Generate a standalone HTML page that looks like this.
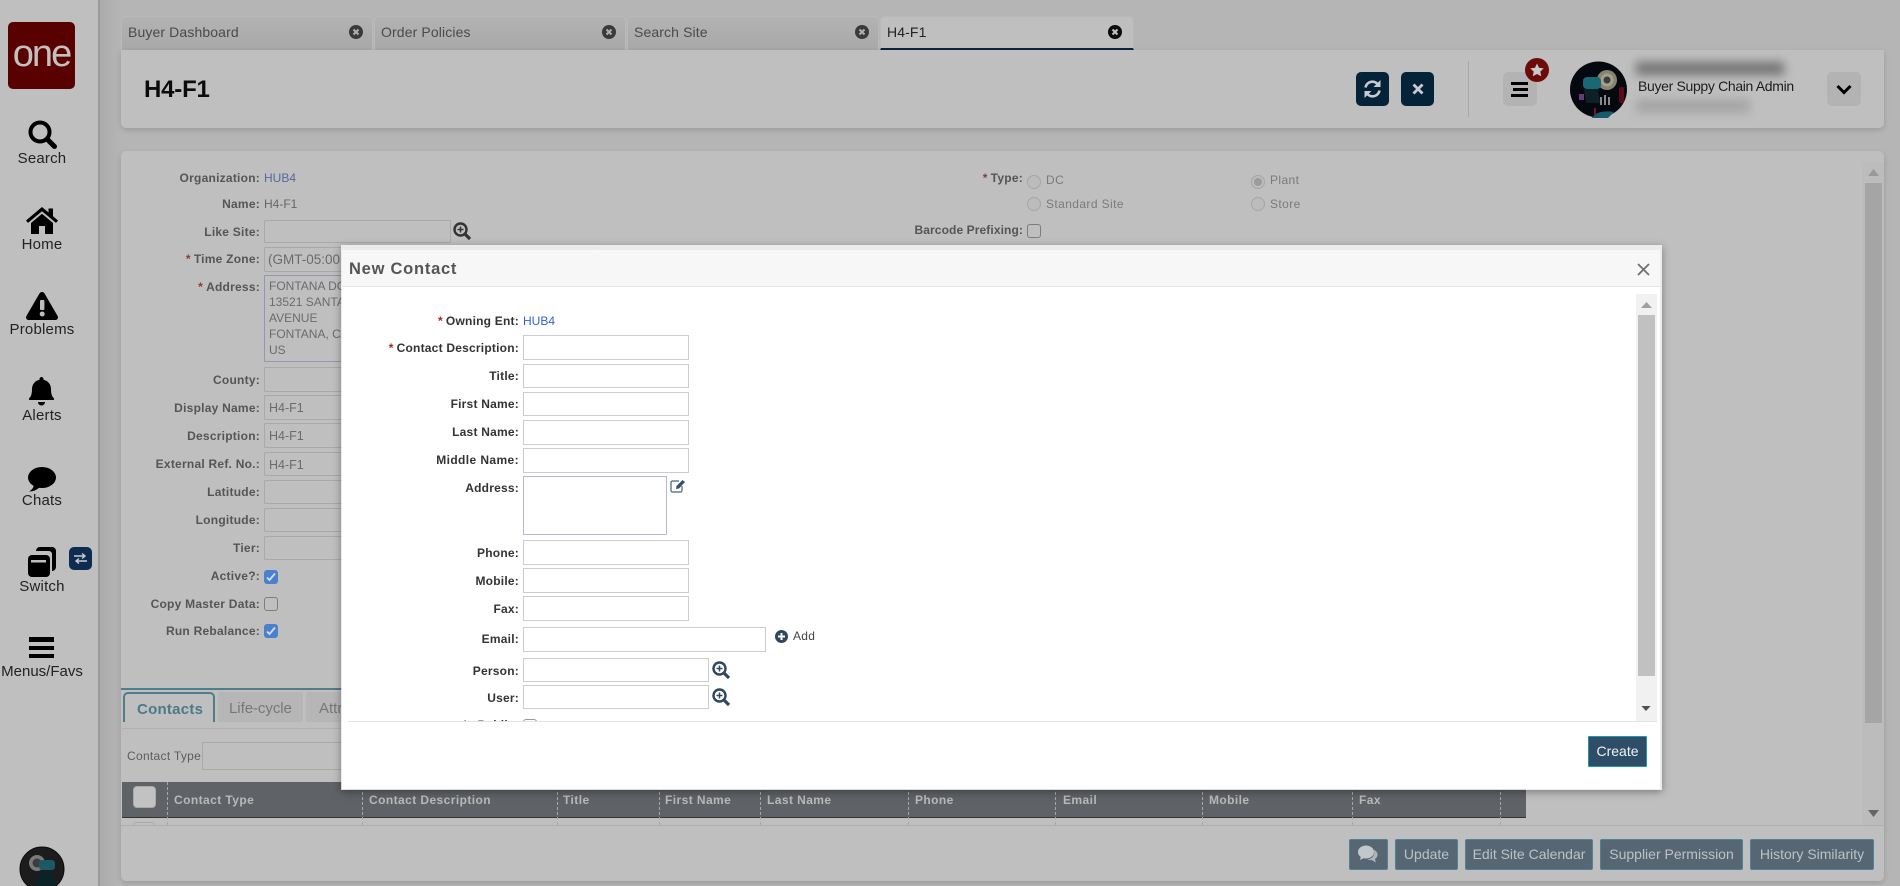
<!DOCTYPE html>
<html><head><meta charset="utf-8"><title>H4-F1</title>
<style>
html,body{margin:0;padding:0}
body{width:1900px;height:886px;overflow:hidden;background:#b5b5b5;position:relative;font-family:"Liberation Sans",sans-serif;font-size:12px;color:#555}
div,span,svg{position:absolute;box-sizing:border-box}
.t{white-space:nowrap;line-height:16px}
.nav{left:0;width:84px;text-align:center;font-size:15px;color:#222;line-height:18px;white-space:nowrap;letter-spacing:.2px}
.tab{top:16px;height:34px;width:252px;border-radius:5px 5px 0 0;background:linear-gradient(#b3b3b3,#a8a8a8);border:1px solid #b9b9b9;border-bottom:0}
.tt{top:24px;font-size:14px;letter-spacing:.12px;color:#4a4a4a;white-space:nowrap;line-height:16px}
.lb{left:100px;width:160px;text-align:right;font-weight:bold;font-size:12px;letter-spacing:.24px;color:#555;white-space:nowrap;line-height:16px}
.lb i,.ml i{font-style:normal;color:#8c3a3a;margin-right:3px}
.f{left:264px;width:200px;border:1px solid #a9a9a9;background:#bfbfbf;border-radius:1px;font-size:12.5px;color:#6b6b6b;padding:4px 0 0 4px;white-space:nowrap;line-height:16px}
.cb{left:264px;width:14px;height:14px;border-radius:3px}
.on{background:#4a80cc;border:1px solid #4a80cc}
.off{background:#bfbfbf;border:1.5px solid #7d7d7d}
.sep{top:782px;height:43px;width:0;border-left:1px dashed #a8a8a8}
.th{top:792px;font-weight:bold;color:#b9b9b9;font-size:12px;letter-spacing:.42px;white-space:nowrap;line-height:16px}
.fb{top:839px;height:31px;background:#566673;border:1px solid #4b8494;border-radius:2px;color:#bcc2c7;font-size:14px;text-align:center;line-height:29px;white-space:nowrap}
.rd{width:14px;height:14px;border-radius:50%;border:1px solid #a6a6a6;background:#bcbcbc}
.rt{font-size:12px;letter-spacing:.4px;color:#7a7a7a;white-space:nowrap;line-height:16px}
.ml{left:342px;width:177px;text-align:right;font-weight:bold;font-size:12px;letter-spacing:.22px;color:#333;white-space:nowrap;line-height:16px}
.ml i{color:#b02020}
.mi{left:523px;width:166px;height:25px;border:1px solid #ccc;background:#fff}
</style></head><body>

<!-- sidebar -->
<div style="left:99px;top:0;width:22px;height:886px;background:linear-gradient(90deg,#ababab,#b5b5b5)"></div>
<div style="left:0;top:0;width:100px;height:886px;background:#bfbfbf;border-right:2px solid #9b9b9b"></div>
<div style="left:8px;top:22px;width:67px;height:67px;background:#590000;border-radius:5px;color:#c4c0c0;font-size:38px;line-height:64px;text-align:center;letter-spacing:-2px">one</div>

<svg style="left:28px;top:120px" width="29" height="29" viewBox="0 0 29 29"><circle cx="12" cy="12" r="9.500" fill="none" stroke="#000" stroke-width="4"/><path d="M19 19l7.500 7.500" stroke="#000" stroke-width="5" stroke-linecap="round"/></svg>
<div class="nav" style="top:150px">Search</div>

<svg style="left:26px;top:207px" width="32" height="27" viewBox="0 0 32 27"><path d="M16 0L0 13.500l2 2.400L16 4.200l14 11.700 2-2.400-5-4.200V1.500h-4.500v4L16 0z" fill="#000"/><path d="M16 6.800L5 16v11h8v-8h6v8h8V16z" fill="#000"/></svg>
<div class="nav" style="top:236px">Home</div>

<svg style="left:26px;top:292px" width="32" height="28" viewBox="0 0 32 28"><path d="M16 0c1 0 2 .6 2.600 1.600l13 22.400c1 1.800-.2 4-2.600 4H3c-2.400 0-3.600-2.200-2.600-4l13-22.400C14 .6 15 0 16 0z" fill="#000"/><rect x="14" y="8" width="4.400" height="10" rx="1" fill="#bfbfbf"/><circle cx="16.200" cy="22" r="2.500" fill="#bfbfbf"/></svg>
<div class="nav" style="top:321px">Problems</div>

<svg style="left:29px;top:377px" width="25" height="29" viewBox="0 0 25 29"><path d="M12.500 0c1.100 0 2 .9 2 2v.8c4.500.9 7.500 4.700 7.500 9.200 0 6 1.500 8 3 9.500.4.500 0 1.500-.8 1.500H.8c-.8 0-1.200-1-.8-1.500C1.500 20 3 18 3 12c0-4.500 3-8.300 7.500-9.200V2c0-1.100.9-2 2-2z" fill="#000"/><path d="M9 25h7c0 2-1.500 3.500-3.500 3.500S9 27 9 25z" fill="#000"/></svg>
<div class="nav" style="top:407px">Alerts</div>

<svg style="left:28px;top:467px" width="28" height="25" viewBox="0 0 28 25"><ellipse cx="14" cy="10.500" rx="14" ry="10.500" fill="#000"/><path d="M6 17C6 20 4 23 1 24.500c4.500 0 9-2 11-5z" fill="#000"/></svg>
<div class="nav" style="top:492px">Chats</div>

<svg style="left:28px;top:547px" width="28" height="30" viewBox="0 0 28 30"><path d="M8 4a4 4 0 0 1 4-4h12a4 4 0 0 1 4 4v16a4 4 0 0 1-4 4v-17a3 3 0 0 0-3-3H8z" fill="#000"/><rect x="0" y="8" width="22" height="22" rx="4" fill="#000"/><rect x="3" y="13" width="15" height="2.500" fill="#bfbfbf"/></svg>
<div style="left:69px;top:547px;width:23px;height:23px;background:#0e2c50;border-radius:5px"></div>
<svg style="left:74px;top:553px" width="13" height="11" viewBox="0 0 13 11"><path d="M0 3h10M8 0.500L11 3 8 5.500M13 8H3M5 5.500L2 8l3 2.500" fill="none" stroke="#c8ccd2" stroke-width="1.400"/></svg>
<div class="nav" style="top:578px">Switch</div>

<div style="left:29px;top:637px;width:25px;height:5px;background:#000"></div>
<div style="left:29px;top:646px;width:25px;height:4px;background:#000"></div>
<div style="left:29px;top:654px;width:25px;height:4px;background:#000"></div>
<div class="nav" style="top:663px;font-size:15px;letter-spacing:0">Menus/Favs</div>

<svg style="left:19px;top:846px" width="46" height="40" viewBox="0 0 46 40"><circle cx="23" cy="23" r="22" fill="#1c1c1c" stroke="#0c0c0c" stroke-width="1"/><circle cx="18" cy="17" r="8" fill="#7a7a7a"/><circle cx="18" cy="17" r="4.500" fill="#3c3c3c"/><rect x="20" y="14" width="16" height="10" rx="3" fill="#1a5a66"/><path d="M16 40l4-14h13l4 14z" fill="#0b2226"/></svg>

<!-- tabs -->
<div class="tab" style="left:121px"></div>
<div class="tab" style="left:374px"></div>
<div class="tab" style="left:627px"></div>
<div class="tab" style="left:880px;width:254px;background:#bfbfbf;border-bottom:2px solid #0c2440"></div>
<div class="tt" style="left:128px">Buyer Dashboard</div>
<div class="tt" style="left:381px">Order Policies</div>
<div class="tt" style="left:634px">Search Site</div>
<div class="tt" style="left:887px;color:#222">H4-F1</div>
<svg style="left:349px;top:25px" width="14" height="14" viewBox="0 0 14 14"><circle cx="7" cy="7" r="7" fill="#3a3a3a"/><path d="M4.500 4.500l5 5m0-5l-5 5" stroke="#b0b0b0" stroke-width="2"/></svg>
<svg style="left:602px;top:25px" width="14" height="14" viewBox="0 0 14 14"><circle cx="7" cy="7" r="7" fill="#3a3a3a"/><path d="M4.500 4.500l5 5m0-5l-5 5" stroke="#b0b0b0" stroke-width="2"/></svg>
<svg style="left:855px;top:25px" width="14" height="14" viewBox="0 0 14 14"><circle cx="7" cy="7" r="7" fill="#3a3a3a"/><path d="M4.500 4.500l5 5m0-5l-5 5" stroke="#b0b0b0" stroke-width="2"/></svg>
<svg style="left:1108px;top:25px" width="14" height="14" viewBox="0 0 14 14"><circle cx="7" cy="7" r="7" fill="#0c0c0c"/><path d="M4.500 4.500l5 5m0-5l-5 5" stroke="#c4c4c4" stroke-width="2"/></svg>

<!-- header -->
<div style="left:121px;top:50px;width:1763px;height:78px;background:#bfbfbf;border-radius:0 0 5px 5px;box-shadow:0 2px 6px rgba(0,0,0,.15)"></div>
<div class="t" style="left:144px;top:76px;font-size:24px;line-height:28px;font-weight:bold;color:#0b0b0b;letter-spacing:-.2px">H4-F1</div>
<div style="left:1356px;top:72px;width:33px;height:34px;background:#042238;border-radius:5px"></div>
<svg style="left:1363px;top:79px" width="19" height="20" viewBox="0 0 19 20"><path d="M2.500 8.500A7 7 0 0 1 15 5.500" fill="none" stroke="#c8ccd0" stroke-width="2.600"/><path d="M17.500 1v7h-7z" fill="#c8ccd0"/><path d="M16.500 11.500A7 7 0 0 1 4 14.500" fill="none" stroke="#c8ccd0" stroke-width="2.600"/><path d="M1.500 19v-7h7z" fill="#c8ccd0"/></svg>
<div style="left:1401px;top:72px;width:33px;height:34px;background:#042238;border-radius:5px"></div>
<svg style="left:1412px;top:83px" width="12" height="12" viewBox="0 0 12 12"><path d="M1.500 1.500l9 9m0-9l-9 9" stroke="#c8ccd0" stroke-width="2.800"/></svg>
<div style="left:1468px;top:61px;width:1px;height:56px;background:#a8a8a8"></div>
<div style="left:1503px;top:72px;width:34px;height:34px;background:#b3b3b3;border-radius:5px"></div>
<div style="left:1511px;top:82px;width:17px;height:3px;background:#000"></div>
<div style="left:1513px;top:88px;width:15px;height:3px;background:#000"></div>
<div style="left:1511px;top:94px;width:17px;height:3px;background:#000"></div>
<div style="left:1525px;top:58px;width:24px;height:24px;background:#6d0a0a;border-radius:50%"></div>
<svg style="left:1530px;top:63px" width="14" height="14" viewBox="0 0 14 14"><path d="M7 .5l2 4.300 4.700.6-3.400 3.200.9 4.700L7 11l-4.200 2.300.9-4.700L.3 5.400 5 4.800z" fill="#c9c9c9"/></svg>
<svg style="left:1570px;top:61px" width="57" height="57" viewBox="0 0 57 57"><ellipse cx="28.500" cy="28.500" rx="28.500" ry="28" fill="#060810"/><circle cx="37" cy="19" r="10" fill="#86836f"/><circle cx="37" cy="19" r="6.500" fill="#a3a090"/><circle cx="37" cy="19" r="3.500" fill="#3d3c38"/><rect x="13" y="16" width="18" height="12" rx="4" fill="#1a6874"/><path d="M14 28h14l2 14H16z" fill="#0d2025"/><rect x="49" y="26" width="5" height="16" rx="2" fill="#5a0a18"/><rect x="9" y="33" width="5" height="6" fill="#6a3a76"/><path d="M22 57c2-5 11-8 22-6l-6 6z" fill="#175a6c"/><path d="M31 36v8M35 34v10M39 36v8" stroke="#8a8a8a" stroke-width="2"/><rect x="24" y="47" width="2" height="7" fill="#7a1020"/></svg>
<div style="left:1636px;top:62px;width:148px;height:13px;background:#4a4a4a;filter:blur(5px);opacity:.65"></div>
<div class="t" style="left:1638px;top:78px;font-size:14px;color:#1c1c1c;letter-spacing:-.33px">Buyer Suppy Chain Admin</div>
<div style="left:1636px;top:100px;width:114px;height:12px;background:#8e8e8e;filter:blur(5px);opacity:.6"></div>
<div style="left:1827px;top:72px;width:34px;height:34px;background:#b3b3b3;border-radius:5px"></div>
<svg style="left:1836px;top:84px" width="16" height="11" viewBox="0 0 16 11"><path d="M1.500 2l6.500 6.500L14.500 2" fill="none" stroke="#000" stroke-width="3"/></svg>

<!-- main panel -->
<div style="left:121px;top:151px;width:1763px;height:730px;background:#bfbfbf;border-radius:5px;box-shadow:0 2px 6px rgba(0,0,0,.15)"></div>

<div class="lb" style="top:170px">Organization:</div>
<div class="t" style="left:264px;top:170px;color:#56689c">HUB4</div>
<div class="lb" style="top:196px">Name:</div>
<div class="t" style="left:264px;top:196px;color:#666">H4-F1</div>
<div class="lb" style="top:224px">Like Site:</div>
<div class="f" style="top:220px;width:187px;height:23px"></div>
<svg style="left:453px;top:222px" width="18" height="18" viewBox="0 0 18 18"><circle cx="7.500" cy="7.500" r="6" fill="none" stroke="#333" stroke-width="2.400"/><path d="M12 12l5 5" stroke="#333" stroke-width="3.200"/><path d="M7.500 4.500v6M4.500 7.500h6" stroke="#333" stroke-width="1.500"/></svg>
<div class="lb" style="top:251px"><i>*</i>Time Zone:</div>
<div class="f" style="top:247px;width:336px;height:25px;font-size:13.5px;padding-left:3px">(GMT-05:00</div>
<div class="lb" style="top:279px"><i>*</i>Address:</div>
<div class="f" style="top:275px;height:87px;border-color:#9099ad;line-height:16px;padding:2px 0 0 4px;font-size:12px">FONTANA DC<br>13521 SANTA<br>AVENUE<br>FONTANA, CA<br>US</div>
<div class="lb" style="top:372px">County:</div><div class="f" style="top:367px;height:25px"></div>
<div class="lb" style="top:400px">Display Name:</div><div class="f" style="top:395px;height:25px">H4-F1</div>
<div class="lb" style="top:428px">Description:</div><div class="f" style="top:423px;height:25px">H4-F1</div>
<div class="lb" style="top:456px">External Ref. No.:</div><div class="f" style="top:452px;height:24px">H4-F1</div>
<div class="lb" style="top:484px">Latitude:</div><div class="f" style="top:480px;height:24px"></div>
<div class="lb" style="top:512px">Longitude:</div><div class="f" style="top:508px;height:24px"></div>
<div class="lb" style="top:540px">Tier:</div><div class="f" style="top:536px;height:24px"></div>
<div class="lb" style="top:568px">Active?:</div>
<div class="cb on" style="top:570px"></div>
<svg style="left:266px;top:572px" width="10" height="10" viewBox="0 0 10 10"><path d="M1 5.500l2.500 2.500L9 1.500" fill="none" stroke="#d6dce6" stroke-width="1.800"/></svg>
<div class="lb" style="top:596px">Copy Master Data:</div>
<div class="cb off" style="top:597px"></div>
<div class="lb" style="top:623px">Run Rebalance:</div>
<div class="cb on" style="top:624px"></div>
<svg style="left:266px;top:626px" width="10" height="10" viewBox="0 0 10 10"><path d="M1 5.500l2.500 2.500L9 1.500" fill="none" stroke="#d6dce6" stroke-width="1.800"/></svg>

<div class="lb" style="left:860px;width:163px;top:170px"><i>*</i>Type:</div>
<div class="rd" style="left:1027px;top:175px"></div><div class="rt" style="left:1046px;top:172px">DC</div>
<div class="rd" style="left:1027px;top:197px"></div><div class="rt" style="left:1046px;top:196px">Standard Site</div>
<div class="rd" style="left:1251px;top:175px"></div><div style="left:1254px;top:178px;width:8px;height:8px;border-radius:50%;background:#9c9c9c"></div><div class="rt" style="left:1270px;top:172px">Plant</div>
<div class="rd" style="left:1251px;top:197px"></div><div class="rt" style="left:1270px;top:196px">Store</div>
<div class="lb" style="left:860px;width:163px;top:222px;letter-spacing:.1px">Barcode Prefixing:</div>
<div class="cb off" style="left:1027px;top:224px"></div>

<!-- lower tabs -->
<div style="left:121px;top:688px;width:222px;height:2px;background:#4f7d8a"></div>
<div style="left:123px;top:692px;width:92px;height:30px;border:2px solid #4f7d8a;border-bottom:0;border-radius:5px 5px 0 0"></div>
<div class="t" style="left:137px;top:701px;font-size:15px;line-height:18px;font-weight:bold;color:#4a7a88;letter-spacing:.25px">Contacts</div>
<div style="left:218px;top:692px;width:85px;height:30px;background:#b6b6b6;border-radius:3px 3px 0 0"></div>
<div class="t" style="left:229px;top:700px;font-size:15px;line-height:18px;color:#777;letter-spacing:-.05px">Life-cycle</div>
<div style="left:306px;top:692px;width:60px;height:30px;background:#b6b6b6;border-radius:3px 3px 0 0"></div>
<div class="t" style="left:319px;top:700px;font-size:15px;line-height:18px;color:#777">Attr</div>
<div style="left:122px;top:728px;width:222px;height:1px;background:#b0b0b0"></div>
<div class="t" style="left:127px;top:748px;font-size:12px;color:#5c5c5c;letter-spacing:.3px">Contact Type</div>
<div class="f" style="left:202px;top:742px;width:200px;height:28px"></div>

<!-- table header -->
<div style="left:122px;top:782px;width:1404px;height:36px;background:#5f6266;border-bottom:1px solid #333"></div>
<div style="left:133px;top:786px;width:23px;height:22px;background:#c2c2c2;border:1px solid #aaa;border-radius:4px"></div>
<div style="left:133px;top:822px;width:22px;height:3px;border:1px solid #aaa;border-bottom:0;border-radius:3px 3px 0 0"></div>
<div class="sep" style="left:167px"></div><div class="sep" style="left:362px"></div><div class="sep" style="left:557px"></div><div class="sep" style="left:659px"></div><div class="sep" style="left:760px"></div><div class="sep" style="left:908px"></div><div class="sep" style="left:1055px"></div><div class="sep" style="left:1202px"></div><div class="sep" style="left:1352px"></div><div class="sep" style="left:1500px"></div>
<div class="th" style="left:174px">Contact Type</div>
<div class="th" style="left:369px">Contact Description</div>
<div class="th" style="left:563px">Title</div>
<div class="th" style="left:665px">First Name</div>
<div class="th" style="left:767px">Last Name</div>
<div class="th" style="left:915px">Phone</div>
<div class="th" style="left:1063px">Email</div>
<div class="th" style="left:1209px">Mobile</div>
<div class="th" style="left:1359px">Fax</div>
<div style="left:121px;top:825px;width:1763px;height:1px;background:#aeaeae"></div>

<!-- main scrollbar -->
<div style="left:1863px;top:162px;width:21px;height:663px;background:#bcbcbc"></div>
<div style="left:1865px;top:183px;width:17px;height:540px;background:#a5a5a5"></div>
<svg style="left:1868px;top:169px" width="11" height="7" viewBox="0 0 11 7"><path d="M5.500 0L11 7H0z" fill="#9a9a9a"/></svg>
<svg style="left:1868px;top:810px" width="11" height="7" viewBox="0 0 11 7"><path d="M5.500 7L11 0H0z" fill="#666"/></svg>

<!-- footer buttons -->
<div class="fb" style="left:1349px;width:39px"></div>
<svg style="left:1358px;top:845px" width="20" height="19" viewBox="0 0 20 19"><ellipse cx="8" cy="7" rx="8" ry="6.500" fill="#c2c7cb"/><path d="M3 11l-1 4 5-2.500z" fill="#c2c7cb"/><path d="M16.500 5c2 1.200 3.200 3 3 5-.2 1.800-1 3-2.500 4l.8 3.500-4-2.500c-1.500.3-3 .1-4.500-.5 3.500-.3 8-3 6.700-9.500z" fill="#aeb5ba"/></svg>
<div class="fb" style="left:1395px;width:63px">Update</div>
<div class="fb" style="left:1465px;width:128px">Edit Site Calendar</div>
<div class="fb" style="left:1600px;width:143px">Supplier Permission</div>
<div class="fb" style="left:1750px;width:124px">History Similarity</div>

<!-- modal -->
<div style="left:341px;top:245px;width:1321px;height:545px;background:rgba(245,245,245,.82);box-shadow:0 2px 8px rgba(0,0,0,.35)"></div>
<div style="left:342px;top:250px;width:1318px;height:539px;background:#fff"></div>
<div style="left:342px;top:250px;width:1318px;height:37px;background:#f7f7f7;border-bottom:1px solid #e4e4e4"></div>
<div class="t" style="left:349px;top:259px;font-size:16.500px;line-height:20px;font-weight:bold;color:#555;letter-spacing:.75px">New Contact</div>
<svg style="left:1637px;top:263px" width="13" height="13" viewBox="0 0 13 13"><path d="M1 1l11 11M12 1L1 12" stroke="#707070" stroke-width="1.800"/></svg>

<div class="ml" style="top:313px"><i>*</i>Owning Ent:</div>
<div class="t" style="left:523px;top:313px;color:#2f5fe0">HUB4</div>
<div class="ml" style="top:340px"><i>*</i>Contact Description:</div><div class="mi" style="top:335px"></div>
<div class="ml" style="top:368px">Title:</div><div class="mi" style="top:364px;height:24px"></div>
<div class="ml" style="top:396px">First Name:</div><div class="mi" style="top:392px;height:24px"></div>
<div class="ml" style="top:424px">Last Name:</div><div class="mi" style="top:420px"></div>
<div class="ml" style="top:452px;letter-spacing:.4px">Middle Name:</div><div class="mi" style="top:448px"></div>
<div class="ml" style="top:480px">Address:</div>
<div class="mi" style="top:476px;width:144px;height:59px;border-color:#b3b9cf"></div>
<svg style="left:670px;top:478px" width="17" height="15" viewBox="0 0 17 15"><path d="M12 8v4.500a1.500 1.500 0 0 1-1.500 1.500h-8A1.500 1.500 0 0 1 1 12.500v-8A1.500 1.500 0 0 1 2.500 3H9" fill="none" stroke="#4a6278" stroke-width="1.200"/><path d="M6.500 8L12.500 2 15 4 9 10.500l-3 .5z" fill="#34506a"/></svg>
<div class="ml" style="top:545px">Phone:</div><div class="mi" style="top:540px"></div>
<div class="ml" style="top:573px">Mobile:</div><div class="mi" style="top:568px"></div>
<div class="ml" style="top:601px">Fax:</div><div class="mi" style="top:596px"></div>
<div class="ml" style="top:631px">Email:</div><div class="mi" style="top:627px;width:243px"></div>
<svg style="left:775px;top:630px" width="13" height="13" viewBox="0 0 13 13"><circle cx="6.500" cy="6.500" r="6.500" fill="#2d4860"/><path d="M6.500 3v7M3 6.500h7" stroke="#fff" stroke-width="2"/></svg>
<div class="t" style="left:793px;top:628px;font-size:12px;color:#444;letter-spacing:.3px">Add</div>
<div class="ml" style="top:663px">Person:</div><div class="mi" style="top:658px;width:186px;height:24px"></div>
<svg style="left:712px;top:661px" width="18" height="18" viewBox="0 0 18 18"><circle cx="7.500" cy="7.500" r="6" fill="none" stroke="#2d4860" stroke-width="2.400"/><path d="M12 12l5 5" stroke="#2d4860" stroke-width="3.200"/><path d="M7.500 4.500v6M4.500 7.500h6" stroke="#2d4860" stroke-width="1.500"/></svg>
<div class="ml" style="top:690px">User:</div><div class="mi" style="top:685px;width:186px;height:24px"></div>
<svg style="left:712px;top:688px" width="18" height="18" viewBox="0 0 18 18"><circle cx="7.500" cy="7.500" r="6" fill="none" stroke="#2d4860" stroke-width="2.400"/><path d="M12 12l5 5" stroke="#2d4860" stroke-width="3.200"/><path d="M7.500 4.500v6M4.500 7.500h6" stroke="#2d4860" stroke-width="1.500"/></svg>
<div style="left:342px;top:712px;width:1294px;height:9px;overflow:hidden"><div class="ml" style="left:0;top:5px">Is Public:</div><div style="left:181px;top:7px;width:14px;height:14px;border:1.500px solid #999;border-radius:3px"></div></div>
<div style="left:348px;top:721px;width:1309px;height:1px;background:#e4e4e4"></div>

<div style="left:1636px;top:294px;width:21px;height:427px;background:#f1f1f1"></div>
<div style="left:1638px;top:315px;width:17px;height:361px;background:#c1c1c1"></div>
<svg style="left:1641px;top:302px" width="11" height="6" viewBox="0 0 11 6"><path d="M5.500 0L11 6H0z" fill="#a0a0a0"/></svg>
<svg style="left:1641px;top:706px" width="10" height="5" viewBox="0 0 11 6"><path d="M5.500 6L11 0H0z" fill="#505050"/></svg>

<div style="left:1588px;top:736px;width:59px;height:31px;background:#2d4e66;border:1px solid #1f97b3;border-radius:1px;color:#f0f4f6;font-size:14px;text-align:center;line-height:28px">Create</div>

</body></html>
